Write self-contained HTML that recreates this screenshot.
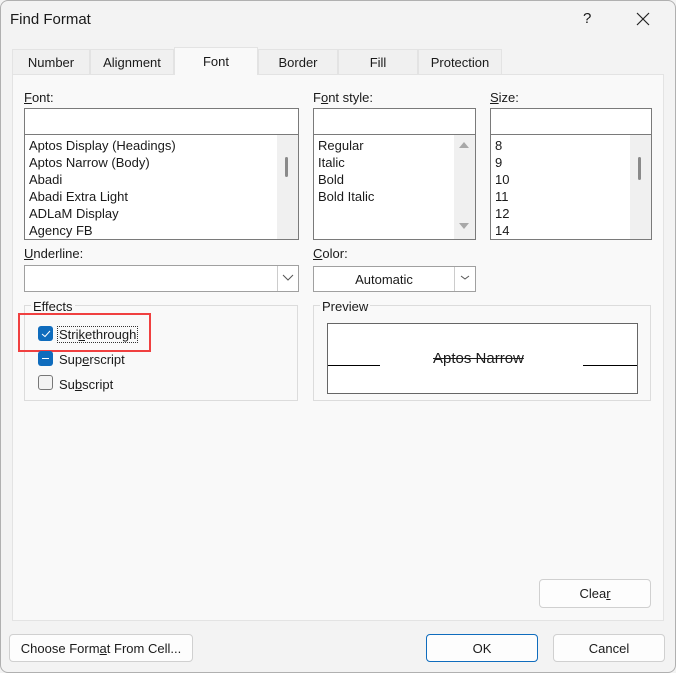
<!DOCTYPE html>
<html><head><style>
*{box-sizing:border-box;margin:0;padding:0}
body{width:676px;height:673px;background:#f3f3f3;font-family:"Liberation Sans",sans-serif;font-size:13px;color:#1a1a1a;position:relative;overflow:hidden}
.a{position:absolute}
.tab{position:absolute;top:49px;height:25px;border:1px solid #e3e3e3;border-bottom:none;background:#f0f0f0;text-align:center;line-height:26px;font-size:13px}
.box{position:absolute;background:#fff;border:1px solid #7a7a7a}
.lbl{position:absolute;font-size:13px}
.li{position:absolute;font-size:13px;line-height:17px}
.sb{position:absolute;background:#f0f0f0}
.btn{position:absolute;background:#fdfdfd;border:1px solid #d0d0d0;border-radius:4px;text-align:center;font-size:13px}
.grp{position:absolute;border:1px solid #dcdcdc}
u{text-decoration:underline}
</style></head><body>
<div class="a" style="left:0;top:0;width:676px;height:673px;border:1px solid #b0b0b0;border-radius:8px;background:#f3f3f3"></div>
<div class="a" style="left:10px;top:11px;font-size:15px">Find Format</div>
<div class="a" style="left:583px;top:10px;font-size:15px">?</div>
<svg class="a" style="left:636px;top:12px" width="14" height="14"><path d="M1 1L13 13M13 1L1 13" stroke="#222" stroke-width="1.2"/></svg>

<div class="a" style="left:12px;top:74px;width:652px;height:547px;background:#f9f9f9;border:1px solid #e3e3e3"></div>
<div class="tab" style="left:12px;width:78px">Number</div>
<div class="tab" style="left:90px;width:84px">Alignment</div>
<div class="tab" style="left:174px;width:84px;top:47px;height:28px;background:#f9f9f9;line-height:28px;z-index:2">Font</div>
<div class="tab" style="left:258px;width:80px">Border</div>
<div class="tab" style="left:338px;width:80px">Fill</div>
<div class="tab" style="left:418px;width:84px">Protection</div>

<div class="lbl" style="left:24px;top:90px"><u>F</u>ont:</div>
<div class="box" style="left:24px;top:108px;width:275px;height:27px"></div>
<div class="box" style="left:24px;top:134px;width:275px;height:106px"></div>
<div class="sb" style="left:277px;top:135px;width:21px;height:104px"></div>
<div class="a" style="left:285px;top:157px;width:3px;height:20px;background:#8a8a8a;border-radius:2px"></div>
<div class="li" style="left:29px;top:137px">Aptos Display (Headings)<br>Aptos Narrow (Body)<br>Abadi<br>Abadi Extra Light<br>ADLaM Display<br>Agency FB</div>

<div class="lbl" style="left:313px;top:90px">F<u>o</u>nt style:</div>
<div class="box" style="left:313px;top:108px;width:163px;height:27px"></div>
<div class="box" style="left:313px;top:134px;width:163px;height:106px"></div>
<div class="sb" style="left:454px;top:135px;width:21px;height:104px"></div>
<svg class="a" style="left:458px;top:141px" width="12" height="90"><path d="M1 7L6 1L11 7Z M1 82L11 82L6 88Z" fill="#a8a8a8"/></svg>
<div class="li" style="left:318px;top:137px">Regular<br>Italic<br>Bold<br>Bold Italic</div>

<div class="lbl" style="left:490px;top:90px"><u>S</u>ize:</div>
<div class="box" style="left:490px;top:108px;width:162px;height:27px"></div>
<div class="box" style="left:490px;top:134px;width:162px;height:106px"></div>
<div class="sb" style="left:630px;top:135px;width:21px;height:104px"></div>
<div class="a" style="left:638px;top:157px;width:3px;height:23px;background:#8a8a8a;border-radius:2px"></div>
<div class="li" style="left:495px;top:137px">8<br>9<br>10<br>11<br>12<br>14</div>

<div class="lbl" style="left:24px;top:246px"><u>U</u>nderline:</div>
<div class="box" style="left:24px;top:265px;width:275px;height:27px;border-color:#a0a0a0"></div>
<div class="a" style="left:277px;top:266px;width:21px;height:25px;border-left:1px solid #ccc"></div>
<svg class="a" style="left:282px;top:274px" width="12" height="8"><path d="M1 1L6 6L11 1" stroke="#555" fill="none"/></svg>

<div class="lbl" style="left:313px;top:246px"><u>C</u>olor:</div>
<div class="box" style="left:313px;top:266px;width:163px;height:26px;border-color:#a0a0a0"></div>
<div class="a" style="left:313px;top:272px;width:142px;text-align:center">Automatic</div>
<div class="a" style="left:454px;top:267px;width:21px;height:24px;border-left:1px solid #ccc"></div>
<svg class="a" style="left:459px;top:274px" width="12" height="8"><path d="M2 2L6 5L10 2" stroke="#555" fill="none"/></svg>

<div class="grp" style="left:24px;top:305px;width:274px;height:96px"></div>
<div class="a" style="left:31px;top:299px;background:#f9f9f9;padding:0 2px">Effects</div>
<div class="a" style="left:38px;top:326px;width:15px;height:15px;background:#0f6cbd;border-radius:3px"></div>
<svg class="a" style="left:41px;top:329px" width="10" height="9"><path d="M1 5L4 7.5L9 2" stroke="#fff" fill="none" stroke-width="1"/></svg>
<div class="a" style="left:57px;top:326px;border:1px dotted #333;padding:0 1px;line-height:15px">Stri<u>k</u>ethrough</div>
<div class="a" style="left:18px;top:313px;width:133px;height:39px;border:2px solid #f04040"></div>
<div class="a" style="left:38px;top:351px;width:15px;height:15px;background:#0f6cbd;border-radius:3px"></div>
<div class="a" style="left:42px;top:358px;width:7px;height:1px;background:#fff"></div>
<div class="a" style="left:59px;top:352px">Sup<u>e</u>rscript</div>
<div class="a" style="left:38px;top:375px;width:15px;height:15px;background:#f3f3f3;border:1px solid #777;border-radius:3px"></div>
<div class="a" style="left:59px;top:377px">Su<u>b</u>script</div>

<div class="grp" style="left:313px;top:305px;width:338px;height:96px"></div>
<div class="a" style="left:320px;top:299px;background:#f9f9f9;padding:0 2px">Preview</div>
<div class="a" style="left:327px;top:323px;width:311px;height:71px;background:#fff;border:1px solid #666"></div>
<div class="a" style="left:328px;top:365px;width:52px;height:1px;background:#000"></div>
<div class="a" style="left:583px;top:365px;width:54px;height:1px;background:#000"></div>
<div class="a" style="left:433px;top:350px;font-size:15px;text-decoration:line-through">Aptos Narrow</div>

<div class="btn" style="left:539px;top:579px;width:112px;height:29px;line-height:28px">Clea<u>r</u></div>
<div class="btn" style="left:9px;top:634px;width:184px;height:28px;line-height:27px">Choose Form<u>a</u>t From Cell...</div>
<div class="btn" style="left:426px;top:634px;width:112px;height:28px;line-height:27px;border-color:#0f6cbd">OK</div>
<div class="btn" style="left:553px;top:634px;width:112px;height:28px;line-height:27px">Cancel</div>
</body></html>
